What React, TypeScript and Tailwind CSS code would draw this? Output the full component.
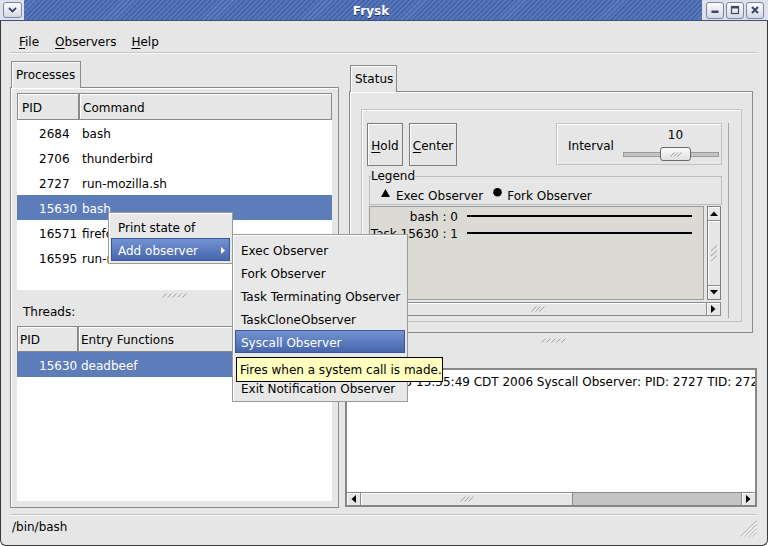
import React from "react";

function Hatch({ n, w, h, step, color = "#a0a0a0" }: { n: number; w: number; h: number; step: number; color?: string }) {
  const lines = [];
  for (let i = 0; i < n; i++) {
    lines.push(
      <line key={i} x1={i * step + 0.5} y1={h - 0.5} x2={i * step + h - 0.5} y2={0.5} stroke={color} strokeWidth={1} />
    );
  }
  return (
    <svg width={w} height={h} viewBox={`0 0 ${w} ${h}`}>
      {lines}
    </svg>
  );
}

function Arrow({ dir }: { dir: "up" | "down" | "left" | "right" }) {
  if (dir === "up")
    return (
      <svg width="8" height="5" viewBox="0 0 8 5">
        <path d="M0 5 L4 0.5 L8 5 Z" fill="#000" />
      </svg>
    );
  if (dir === "down")
    return (
      <svg width="8" height="5" viewBox="0 0 8 5">
        <path d="M0 0 L4 4.5 L8 0 Z" fill="#000" />
      </svg>
    );
  if (dir === "left")
    return (
      <svg width="5" height="8" viewBox="0 0 5 8">
        <path d="M5 0 L0.5 4 L5 8 Z" fill="#000" />
      </svg>
    );
  return (
    <svg width="5" height="8" viewBox="0 0 5 8">
      <path d="M0 0 L4.5 4 L0 8 Z" fill="#000" />
    </svg>
  );
}

function TBtn({ children }: { children: React.ReactNode }) {
  return (
    <div className="w-[18px] h-[17px] rounded-[3px] border border-[#7b87a5] bg-linear-to-b from-[#fdfdfe] to-[#d3d8e4] flex items-center justify-center">
      {children}
    </div>
  );
}

function TitleBar() {
  return (
    <div className="h-[21px] flex bg-[#dde1e9] border-b border-[#3e4f78]">
      <div className="w-[24px] flex items-center pl-[3px]">
        <div className="w-[19px] h-[16px] rounded-[3px] border border-[#7b87a5] bg-linear-to-b from-[#fdfdfe] to-[#d3d8e4] flex items-center justify-center">
          <svg width="9" height="6" viewBox="0 0 9 6">
            <path d="M1 1 L4.5 4.5 L8 1" fill="none" stroke="#3b4866" strokeWidth="1.8" />
          </svg>
        </div>
      </div>
      <div className="flex-1 flex items-center justify-center pl-[16px] pt-[1px] bg-[repeating-linear-gradient(135deg,#5b7abd_0px,#5b7abd_1.5px,#4767ad_1.5px,#4767ad_3.5px)] text-white font-bold text-[12px] [text-shadow:0_1px_0_#243866]">
        Frysk
      </div>
      <div className="w-[66px] flex items-center pl-[4px] gap-[2px]">
        <TBtn>
          <svg width="10" height="10" viewBox="0 0 10 10">
            <rect x="1.5" y="5.5" width="7" height="2.5" fill="#3b4866" />
          </svg>
        </TBtn>
        <TBtn>
          <svg width="10" height="10" viewBox="0 0 10 10">
            <rect x="1.5" y="1.5" width="7" height="7" fill="none" stroke="#3b4866" strokeWidth="1.2" />
            <rect x="1.5" y="1.5" width="7" height="2" fill="#3b4866" />
          </svg>
        </TBtn>
        <TBtn>
          <svg width="10" height="10" viewBox="0 0 10 10">
            <path d="M2 2 L8 8 M8 2 L2 8" stroke="#3b4866" strokeWidth="2" />
          </svg>
        </TBtn>
      </div>
    </div>
  );
}

function MenuBar() {
  return (
    <div className="h-[31px] pt-[13px] pl-[18px] flex leading-[16px]">
      <span>
        <span className="underline underline-offset-2">F</span>ile
      </span>
      <span className="ml-[16px]">
        <span className="underline underline-offset-2">O</span>bservers
      </span>
      <span className="ml-[15px]">
        <span className="underline underline-offset-2">H</span>elp
      </span>
    </div>
  );
}

const headCell = "border border-[#8a8a8a] bg-[#e6e6e6] shadow-[inset_1px_1px_0_#ffffff] flex items-center pt-[2px]";

function ProcessTree() {
  const rows = [
    ["2684", "bash"],
    ["2706", "thunderbird"],
    ["2727", "run-mozilla.sh"],
    ["15630", "bash"],
    ["16571", "firefox"],
    ["16595", "run-mozilla.sh"],
  ];
  return (
    <div className="mt-[5px] ml-[6px] w-[315px] h-[197px] flex flex-col bg-white">
      <div className="h-[27px] flex">
        <div className={`${headCell} w-[62px] pl-[4px]`}>PID</div>
        <div className={`${headCell} flex-1 pl-[3px]`}>Command</div>
      </div>
      {rows.map((r, i) => (
        <div key={i} className={`h-[25px] pt-[2px] flex items-center whitespace-nowrap ${i === 3 ? "bg-[#5d7dba] text-white" : ""}`}>
          <div className="w-[62px] pl-[22px]">{r[0]}</div>
          <div className="pl-[3px]">{r[1]}</div>
        </div>
      ))}
    </div>
  );
}

function ThreadTree() {
  return (
    <div className="ml-[6px] w-[315px] h-[175px] flex flex-col bg-white">
      <div className="h-[26px] flex">
        <div className={`${headCell} w-[61px] pl-[2px]`}>PID</div>
        <div className={`${headCell} flex-1 pl-[2px]`}>Entry Functions</div>
      </div>
      <div className="h-[25px] pt-[2px] flex items-center bg-[#5d7dba] text-white">
        <div className="w-[61px] pl-[22px]">15630</div>
        <div className="pl-[3px]">deadbeef</div>
      </div>
    </div>
  );
}

function LeftColumn() {
  return (
    <div className="ml-[9px] w-[329px] flex flex-col pt-[7px]">
      <div className="relative z-10 -mb-px ml-[1px] w-[70px] h-[27px] border border-b-0 border-[#8a8a8a] bg-[#e6e6e6] shadow-[inset_1px_1px_0_#ffffff] pl-[4px] pt-[5px] leading-[16px]">
        Processes
      </div>
      <div className="h-[421px] border border-[#8a8a8a] shadow-[inset_1px_1px_0_#ffffff] flex flex-col">
        <ProcessTree />
        <div className="h-[10px] flex items-center justify-center">
          <Hatch n={5} w={25} h={5} step={5} />
        </div>
        <div className="h-[26px] leading-[24px] pl-[12px]">Threads:</div>
        <ThreadTree />
      </div>
    </div>
  );
}

const raised = "border border-[#7c7c7c] bg-[#e6e6e6] shadow-[inset_1px_1px_0_#ffffff]";

function StatusPanel() {
  return (
    <div className="ml-[4px] w-[404px] flex flex-col">
      <div className="relative z-10 -mb-px ml-[1px] w-[47px] h-[27px] border border-b-0 border-[#8a8a8a] bg-[#e6e6e6] shadow-[inset_1px_1px_0_#ffffff] pl-[4px] pt-[5px] leading-[16px]">
        Status
      </div>
      <div className="h-[242px] border border-[#8a8a8a] shadow-[inset_1px_1px_0_#ffffff]">
        <div className="mt-[17px] ml-[11px] w-[381px] h-[213px] border border-[#c2c2c2] shadow-[inset_1px_1px_0_#ffffff]">
          <div className="mt-[13px] ml-[5px] w-[362px] h-[195px] border-r border-[#a6a6a6] flex flex-col">
            <div className="h-[43px] flex items-start">
              <div className={`${raised} w-[36px] h-[43px] pt-[2px] flex items-center justify-center`}>
                <span>
                  <span className="underline underline-offset-2">H</span>old
                </span>
              </div>
              <div className={`${raised} ml-[6px] w-[48px] h-[43px] pt-[2px] flex items-center justify-center`}>
                <span>
                  <span className="underline underline-offset-2">C</span>enter
                </span>
              </div>
              <div className="ml-auto mr-[6px] w-[166px] h-[42px] border border-[#c2c2c2] shadow-[inset_1px_1px_0_#ffffff] flex">
                <div className="pl-[11px] pt-[3px] flex items-center">Interval</div>
                <div className="ml-auto mr-[2px] w-[96px] flex flex-col">
                  <div className="pt-[4px] leading-[14px] pl-[37px]">
                    <div className="w-[31px] text-center">10</div>
                  </div>
                  <div className="mt-[5px] h-[14px] flex items-center">
                    <div className="w-[37px] h-[5px] bg-[#c3c3c3] border-y border-l border-[#9a9a9a]" />
                    <div className="w-[31px] h-[14px] rounded-[3px] border border-[#6a6a6a] bg-linear-to-b from-[#fafafa] to-[#e0e0e0] flex items-center justify-center">
                      <Hatch n={3} w={12} h={5} step={3.5} color="#9a9a9a" />
                    </div>
                    <div className="w-[28px] h-[5px] bg-[#c3c3c3] border-y border-r border-[#9a9a9a]" />
                  </div>
                </div>
              </div>
            </div>
            <fieldset className="mt-[2px] ml-[2px] mr-[6px] border border-[#bdbdbd] pl-[1px] pt-[3px] pb-[1px]">
              <legend className="p-0 ml-0 leading-[16px]">Legend</legend>
              <div className="ml-[10px] h-[16px] pt-[2px] flex items-center whitespace-nowrap">
                <svg width="9" height="16" viewBox="0 0 9 16" className="overflow-visible">
                  <path d="M0 9 L4.5 1 L9 9 Z" fill="#000" />
                </svg>
                <span className="ml-[6px]">Exec Observer</span>
                <svg width="9" height="16" viewBox="0 0 9 16" className="ml-[10px] overflow-visible">
                  <circle cx="4.5" cy="4.3" r="4.3" fill="#000" />
                </svg>
                <span className="ml-[5px]">Fork Observer</span>
              </div>
            </fieldset>
            <div className="mt-[1px] ml-[2px] mr-[7px] flex flex-col">
              <div className="flex h-[94px]">
                <div className="w-[335px] border border-[#9a9a9a] bg-[#dcdad5] overflow-hidden whitespace-nowrap">
                  <div className="h-[17px] flex items-center">
                    <div className="w-[88px] pt-[2px] text-right">bash : 0</div>
                    <div className="ml-[9px] w-[225px] h-[2px] bg-black" />
                  </div>
                  <div className="h-[17px] flex items-center">
                    <div className="w-[88px] pt-[3px] flex justify-end">
                      <span>Task 15630 : 1</span>
                    </div>
                    <div className="ml-[9px] w-[225px] h-[2px] bg-black" />
                  </div>
                </div>
                <div className="ml-[3px] w-[14px] flex flex-col border border-[#7c7c7c] bg-[#e6e6e6]">
                  <div className="h-[14px] border-b border-[#8a8a8a] shadow-[inset_1px_1px_0_#ffffff] flex items-center justify-center">
                    <Arrow dir="up" />
                  </div>
                  <div className="flex-1 shadow-[inset_1px_1px_0_#ffffff] flex items-center justify-center">
                    <svg width="8" height="16" viewBox="0 0 8 16">
                      <path d="M1 6 L7 0.5 M1 11 L7 5.5 M1 16 L7 10.5" stroke="#a0a0a0" strokeWidth="1" />
                    </svg>
                  </div>
                  <div className="h-[14px] border-t border-[#8a8a8a] shadow-[inset_1px_1px_0_#ffffff] flex items-center justify-center">
                    <Arrow dir="down" />
                  </div>
                </div>
              </div>
              <div className="mt-[2px] h-[14px] flex border border-[#8a8a8a] bg-[#e6e6e6]">
                <div className="flex-1 shadow-[inset_1px_1px_0_#ffffff] flex items-center justify-center">
                  <Hatch n={3} w={14} h={6} step={4} />
                </div>
                <div className="w-[14px] border-l border-[#8a8a8a] shadow-[inset_1px_1px_0_#ffffff] flex items-center justify-center">
                  <Arrow dir="right" />
                </div>
              </div>
            </div>
          </div>
        </div>
      </div>
    </div>
  );
}

function LogBox() {
  return (
    <div className="mt-[21px] h-[139px] border-2 border-[#868686] flex flex-col bg-white">
      <div className="flex-1 overflow-hidden whitespace-nowrap pt-[4px] pl-[1px] leading-[16px]">
        Thu Jun 15 15:55:49 CDT 2006 Syscall Observer: PID: 2727 TID: 2727 Syscall: read
      </div>
      <div className="h-[13px] flex border-t border-[#8a8a8a] bg-[#c4c4c4]">
        <div className="w-[14px] border-r border-[#8a8a8a] bg-[#e6e6e6] shadow-[inset_1px_1px_0_#ffffff] flex items-center justify-center">
          <Arrow dir="left" />
        </div>
        <div className="w-[212px] border-r border-[#8a8a8a] bg-[#e6e6e6] shadow-[inset_1px_1px_0_#ffffff] flex items-center justify-center">
          <Hatch n={3} w={14} h={6} step={4} />
        </div>
        <div className="flex-1" />
        <div className="w-[14px] border-l border-[#8a8a8a] bg-[#e6e6e6] shadow-[inset_1px_1px_0_#ffffff] flex items-center justify-center">
          <Arrow dir="right" />
        </div>
      </div>
    </div>
  );
}

function RightColumn() {
  return (
    <div className="ml-[6px] w-[412px] flex flex-col pt-[11px]">
      <StatusPanel />
      <div className="h-[14px] flex items-center justify-center pl-[4px]">
        <Hatch n={5} w={25} h={5} step={5} />
      </div>
      <LogBox />
    </div>
  );
}

function StatusBar() {
  return (
    <>
      <div className="mt-[6px] h-[2px] ml-[9px] mr-[10px] border-t border-[#c6c6c6] border-b border-b-[#f7f7f7]" />
      <div className="flex-1 flex items-start pl-[11px] pt-[3px] leading-[16px]">
        <span>/bin/bash</span>
        <svg width="17" height="17" viewBox="0 0 17 17" className="ml-auto mr-[10px] mt-[1px]">
          {[0, 4, 8, 12].map((o) => (
            <g key={o}>
              <line x1={o + 1} y1={16.5} x2={16.5} y2={o + 1} stroke="#9a9a9a" strokeWidth="1" />
              <line x1={o + 2} y1={16.5} x2={16.5} y2={o + 2} stroke="#ffffff" strokeWidth="1" />
            </g>
          ))}
        </svg>
      </div>
    </>
  );
}

const hl = "border border-[#3b5898] bg-linear-to-b from-[#7393d2] to-[#4866ad] text-white";

function Menus() {
  const sub = [
    "Exec Observer",
    "Fork Observer",
    "Task Terminating Observer",
    "TaskCloneObserver",
    "Syscall Observer",
    "Signal Observer",
    "Exit Notification Observer",
  ];
  return (
    <>
      <div className="absolute left-[108px] top-[212px] w-[125px] h-[52px] border border-[#9a9a9a] bg-[#e8e8e8] shadow-[inset_1px_1px_0_#ffffff] pt-[2px] px-[2px]">
        <div className="h-[23px] pt-[2px] flex items-center pl-[7px]">Print state of</div>
        <div className={`h-[23px] pt-[2px] flex items-center pl-[6px] ${hl}`}>
          <span>Add observer</span>
          <svg width="4" height="7" viewBox="0 0 4 7" className="ml-auto mr-[4px]">
            <path d="M0 0 L4 3.5 L0 7 Z" fill="#ffffff" />
          </svg>
        </div>
      </div>
      <div className="absolute left-[232px] top-[234px] w-[176px] h-[168px] border border-[#9a9a9a] bg-[#e8e8e8] shadow-[inset_1px_1px_0_#ffffff] pt-[3px] px-[2px]">
        {sub.map((s, i) => (
          <div key={s} className={`h-[23px] pt-[2px] flex items-center whitespace-nowrap ${i === 4 ? `${hl} pl-[5px]` : "pl-[6px]"}`}>
            {s}
          </div>
        ))}
      </div>
      <div className="absolute left-[236px] top-[357px] w-[207px] h-[25px] pt-[1px] bg-[#ffffbf] border border-black pl-[3px] flex items-center whitespace-nowrap">
        Fires when a system call is made.
      </div>
    </>
  );
}

export default function App() {
  return (
    <div className="relative w-[768px] h-[546px] overflow-hidden flex flex-col font-['DejaVu_Sans',sans-serif] text-[12px] text-black">
      <TitleBar />
      <div className="flex-1 flex flex-col bg-[#e6e6e6] border-x border-b border-[#3a3a3a] rounded-b-[6px]">
        <MenuBar />
        <div className="h-[2px] ml-[9px] mr-[10px] border-t border-[#c6c6c6] border-b border-b-[#f7f7f7]" />
        <div className="h-[454px] flex">
          <LeftColumn />
          <RightColumn />
        </div>
        <StatusBar />
      </div>
      <Menus />
    </div>
  );
}
